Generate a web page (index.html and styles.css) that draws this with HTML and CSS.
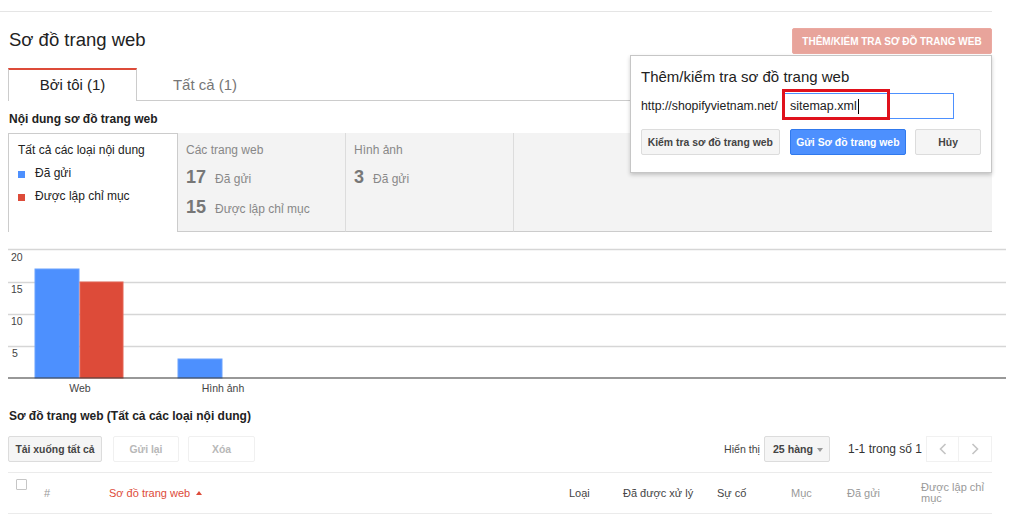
FILE: index.html
```html
<!DOCTYPE html>
<html lang="vi">
<head>
<meta charset="utf-8">
<title>Sơ đồ trang web</title>
<link rel="stylesheet" href="styles.css">
</head>
<body>
<div class="page">
  <div class="topline"></div>
  <div class="header">
    <h1 class="title">Sơ đồ trang web</h1>
    <div class="add-wrap">
      <button class="btn-add">THÊM/KIỂM TRA SƠ ĐỒ TRANG WEB</button>
      <div class="popup">
        <div class="popup-title">Thêm/kiểm tra sơ đồ trang web</div>
        <div class="url-row">
          <span class="url">http://shopifyvietnam.net/</span>
          <div class="input"><span class="input-text">sitemap.xml</span><span class="caret"></span><span class="highlight"></span></div>
        </div>
        <div class="btn-row">
          <button class="btn btn-test">Kiểm tra sơ đồ trang web</button>
          <button class="btn btn-blue">Gửi Sơ đồ trang web</button>
          <button class="btn btn-cancel">Hủy</button>
        </div>
      </div>
    </div>
  </div>

  <div class="tabs">
    <div class="tab active">Bởi tôi (1)</div>
    <div class="tab second">Tất cả (1)</div>
  </div>

  <div class="section-title">Nội dung sơ đồ trang web</div>

  <div class="types">
    <div class="type-sel">
      <div class="line">Tất cả các loại nội dung</div>
      <div class="line legend"><span class="sq blue"></span>Đã gửi</div>
      <div class="line legend"><span class="sq red"></span>Được lập chỉ mục</div>
    </div>
    <div class="type">
      <div class="type-label">Các trang web</div>
      <div class="stat"><span class="num">17</span><span class="stat-label">Đã gửi</span></div>
      <div class="stat"><span class="num">15</span><span class="stat-label">Được lập chỉ mục</span></div>
    </div>
    <div class="type">
      <div class="type-label">Hình ảnh</div>
      <div class="stat"><span class="num">3</span><span class="stat-label">Đã gửi</span></div>
    </div>
    <div class="type-fill"></div>
  </div>

  <svg class="chart" width="1000" height="176" viewBox="0 0 1000 176">
    <g class="grid">
      <line x1="0" y1="17.5" x2="998" y2="17.5"/>
      <line x1="0" y1="50.5" x2="998" y2="50.5"/>
      <line x1="0" y1="82.5" x2="998" y2="82.5"/>
      <line x1="0" y1="114.5" x2="998" y2="114.5"/>
    </g>
    <g class="ylabels">
      <text x="3" y="29">20</text>
      <text x="3" y="61">15</text>
      <text x="3" y="93">10</text>
      <text x="4" y="125">5</text>
    </g>
    <rect class="bar-blue" x="27" y="37" width="44" height="109"/>
    <rect class="bar-red" x="72" y="50" width="43" height="96"/>
    <rect class="bar-blue" x="170" y="127" width="44" height="19"/>
    <line class="axis" x1="0" y1="146" x2="998" y2="146"/>
    <g class="xlabels">
      <text x="72" y="159.5" text-anchor="middle">Web</text>
      <text x="215" y="159.5" text-anchor="middle">Hình ảnh</text>
    </g>
  </svg>

  <div class="section-title second-title">Sơ đồ trang web (Tất cả các loại nội dung)</div>

  <div class="toolbar">
    <button class="tbtn tbtn-download">Tải xuống tất cả</button>
    <button class="tbtn tbtn-disabled tbtn-resend">Gửi lại</button>
    <button class="tbtn tbtn-disabled tbtn-delete">Xóa</button>
    <div class="toolbar-right">
      <span class="show-label">Hiển thị</span>
      <div class="select">25 hàng<span class="select-arrow"></span></div>
      <span class="range">1-1 trong số 1</span>
      <div class="pager">
        <div class="pager-btn"><svg width="8" height="12" viewBox="0 0 8 12"><polyline points="6.5,1 1.5,6 6.5,11" fill="none" stroke="#c4c4c4" stroke-width="1.6"/></svg></div>
        <div class="pager-btn"><svg width="8" height="12" viewBox="0 0 8 12"><polyline points="1.5,1 6.5,6 1.5,11" fill="none" stroke="#c4c4c4" stroke-width="1.6"/></svg></div>
      </div>
    </div>
  </div>

  <div class="table-head">
    <div class="th th-check"><span class="checkbox"></span></div>
    <div class="th th-muted">#</div>
    <div class="th th-sort">Sơ đồ trang web<span class="sort-arrow"></span></div>
    <div class="th">Loại</div>
    <div class="th">Đã được xử lý</div>
    <div class="th">Sự cố</div>
    <div class="th th-muted">Mục</div>
    <div class="th th-muted">Đã gửi</div>
    <div class="th th-muted">Được lập chỉ mục</div>
  </div>
</div>
</body>
</html>
```

FILE: styles.css
```css
body {
  margin: 0;
  font-family: "Liberation Sans", Arial, sans-serif;
  color: #222;
  background: #fff;
}

.page {
  padding: 0 32px 0 8px;
}

.topline {
  height: 11px;
  border-bottom: 1px solid #e5e5e5;
  margin-left: -8px;
}

/* header */
.header {
  display: flex;
  justify-content: space-between;
  align-items: flex-start;
  height: 56px;
}

.title {
  margin: 0;
  padding: 16px 0 0 1px;
  font-size: 18.5px;
  line-height: 24px;
  font-weight: normal;
  color: #222;
}

.add-wrap {
  position: relative;
  margin-top: 16px;
}

.btn-add {
  display: block;
  width: 200px;
  height: 26px;
  box-sizing: border-box;
  border: 1px solid #eba9a1;
  border-radius: 2px;
  background: #e8a49b;
  color: #fff;
  font-family: "Liberation Sans", Arial, sans-serif;
  font-weight: bold;
  font-size: 10px;
  padding: 0;
}

/* popup */
.popup {
  position: absolute;
  top: 27px;
  right: 0;
  width: 362px;
  box-sizing: border-box;
  border: 1px solid #c6c6c6;
  box-shadow: 0 2px 4px rgba(0, 0, 0, 0.2);
  background: #fff;
  padding: 11px 10px 17px 10px;
  z-index: 5;
}

.popup-title {
  font-size: 15px;
  line-height: 20px;
  color: #222;
}

.url-row {
  display: flex;
  align-items: center;
  height: 26px;
  margin-top: 6px;
}

.url {
  width: 142px;
  font-size: 12.3px;
  color: #222;
}

.input {
  position: relative;
  width: 171px;
  height: 26px;
  box-sizing: border-box;
  border: 1px solid #4d90fe;
  padding-left: 6px;
  font-size: 12.5px;
  line-height: 24px;
  display: flex;
  align-items: center;
}

.caret {
  display: inline-block;
  width: 1px;
  height: 15px;
  background: #000;
  margin-left: 1px;
}

.highlight {
  position: absolute;
  left: -2px;
  top: -5px;
  width: 108px;
  height: 31px;
  box-sizing: border-box;
  border: 3px solid #e0111c;
}

.btn-row {
  display: flex;
  margin-top: 10px;
}

.btn {
  height: 26px;
  box-sizing: border-box;
  border: 1px solid #dcdcdc;
  border-radius: 2px;
  background: #f5f5f5;
  color: #444;
  font-family: "Liberation Sans", Arial, sans-serif;
  font-weight: bold;
  font-size: 10.4px;
  padding: 0;
}

.btn-test { width: 139px; }

.btn-blue {
  width: 117px;
  margin-left: 10px;
  background: #4d90fe;
  border-color: #3079ed;
  color: #fff;
}

.btn-cancel {
  width: 66px;
  margin-left: 9px;
}

/* tabs */
.tabs {
  display: flex;
  height: 32px;
  border-bottom: 1px solid #ccc;
}

.tab {
  width: 128px;
  box-sizing: border-box;
  text-align: center;
  font-size: 15px;
  line-height: 30px;
  padding-top: 2px;
  color: #777;
}

.tab.active {
  width: 129px;
  height: 33px;
  padding-top: 0;
  border: 1px solid #ccc;
  border-top: 2px solid #dd4b39;
  border-bottom: none;
  background: #fff;
  color: #222;
}

.tab.second {
  padding-left: 8px;
}

/* section titles */
.section-title {
  margin: 10px 0 6px 1px;
  font-size: 12px;
  line-height: 16px;
  font-weight: bold;
  color: #222;
}

.second-title {
  margin: 0 0 12px 1px;
}

/* content types */
.types {
  display: flex;
  height: 99px;
}

.type-sel {
  width: 170px;
  box-sizing: border-box;
  border: 1px solid #ccc;
  border-bottom: none;
  padding: 5px 0 0 9px;
  font-size: 12px;
  color: #222;
}

.type-sel .line {
  line-height: 23px;
}

.legend {
  display: flex;
  align-items: center;
}

.sq {
  width: 7px;
  height: 7px;
  margin: 1px 10px 0 0;
}

.sq.blue { background: #4d90fe; }
.sq.red { background: #dd4b39; }

.type {
  width: 168px;
  box-sizing: border-box;
  background: #f3f3f3;
  border-bottom: 1px solid #ccc;
  border-right: 1px solid #dcdcdc;
  padding: 6px 0 0 8px;
}

.type-label {
  font-size: 12px;
  line-height: 23px;
  color: #888;
}

.stat {
  line-height: 30px;
  height: 30px;
}

.num {
  font-size: 18px;
  font-weight: bold;
  color: #777;
  margin-right: 9px;
}

.stat-label {
  font-size: 12px;
  color: #888;
}

.type-fill {
  flex: 1;
  background: #f3f3f3;
  border-bottom: 1px solid #ccc;
}

/* chart */
.chart {
  display: block;
  overflow: visible;
}

.grid line {
  stroke: #d6d6d6;
  stroke-width: 1.5;
}

.axis {
  stroke: #333;
  stroke-width: 1.2;
}

.ylabels text,
.xlabels text {
  font-family: "Liberation Sans", Arial, sans-serif;
  font-size: 10.5px;
  fill: #444;
}

.bar-blue {
  fill: #4d90fe;
  stroke: #6aa2fe;
  stroke-width: 1;
}

.bar-red {
  fill: #dd4b39;
  stroke: #e46555;
  stroke-width: 1;
}

/* toolbar */
.toolbar {
  display: flex;
  align-items: center;
  height: 26px;
}

.tbtn {
  height: 26px;
  box-sizing: border-box;
  border: 1px solid #dcdcdc;
  border-radius: 2px;
  background: #f5f5f5;
  color: #444;
  font-family: "Liberation Sans", Arial, sans-serif;
  font-weight: bold;
  font-size: 10.4px;
  padding: 0;
}

.tbtn-download { width: 94px; }

.tbtn-disabled {
  background: #fff;
  border-color: #f0f0f0;
  color: #b8b8b8;
}

.tbtn-resend { width: 66px; margin-left: 11px; }
.tbtn-delete { width: 67px; margin-left: 9px; }

.toolbar-right {
  margin-left: auto;
  display: flex;
  align-items: center;
}

.show-label {
  font-size: 10.6px;
  color: #444;
}

.select {
  position: relative;
  width: 66px;
  height: 26px;
  box-sizing: border-box;
  margin-left: 4px;
  border: 1px solid #dcdcdc;
  border-radius: 2px;
  background: #f5f5f5;
  font-size: 10.6px;
  font-weight: bold;
  color: #444;
  line-height: 24px;
  padding-left: 8px;
}

.select-arrow {
  position: absolute;
  right: 6px;
  top: 11px;
  width: 0;
  height: 0;
  border-left: 3px solid transparent;
  border-right: 3px solid transparent;
  border-top: 4px solid #999;
}

.range {
  margin-left: 18px;
  font-size: 12px;
  color: #333;
}

.pager {
  display: flex;
  margin-left: 4px;
}

.pager-btn {
  width: 33px;
  height: 26px;
  box-sizing: border-box;
  border: 1px solid #f1f1f1;
  display: flex;
  align-items: center;
  justify-content: center;
}

.pager-btn + .pager-btn {
  border-left: none;
}

/* table header */
.table-head {
  display: grid;
  grid-template-columns: 36px 65px 460px 54px 94px 74px 56px 74px 71px;
  height: 40px;
  margin-top: 10px;
  border-top: 1px solid #ebebeb;
  border-bottom: 1px solid #ebebeb;
  align-items: center;
  font-size: 11px;
  line-height: 11px;
  color: #444;
}

.th-check {
  align-self: start;
  padding: 6px 0 0 8px;
}

.checkbox {
  display: block;
  width: 11px;
  height: 11px;
  box-sizing: border-box;
  border: 1px solid #c6c6c6;
  border-radius: 1px;
  background: #fff;
}

.th-muted {
  color: #999;
}

.th-sort {
  color: #dd4b39;
  display: flex;
  align-items: center;
}

.sort-arrow {
  width: 0;
  height: 0;
  margin-left: 6px;
  border-left: 3px solid transparent;
  border-right: 3px solid transparent;
  border-bottom: 4px solid #dd4b39;
}
```
